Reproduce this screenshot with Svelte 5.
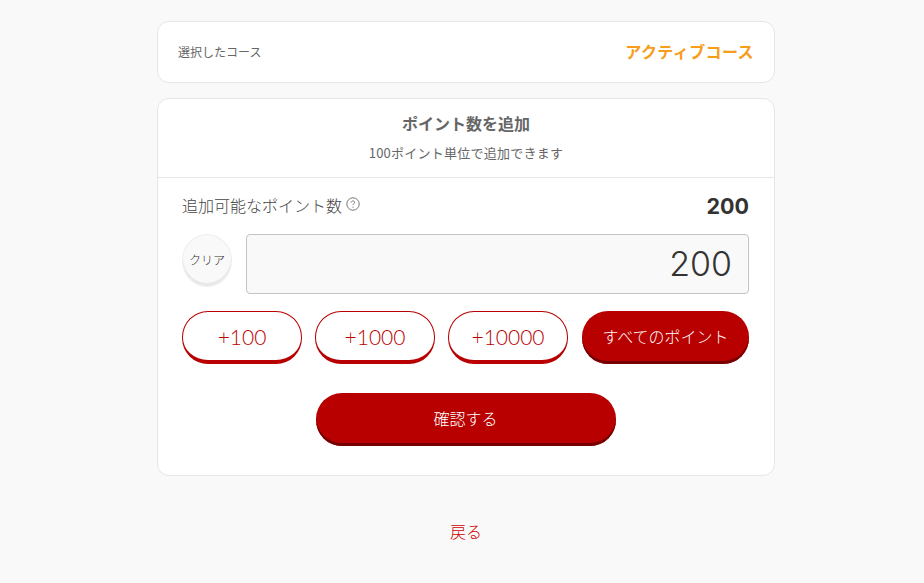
<script>
    const amounts = [100, 1000, 10000];
    let points = $state(200);
    const available = 200;
</script>

<div class="page">
    <div class="content">
        <section class="card course">
            <span class="course-label">選択したコース</span>
            <span class="course-name">アクティブコース</span>
        </section>

        <section class="card add">
            <header class="add-header">
                <h2>ポイント数を追加</h2>
                <p>100ポイント単位で追加できます</p>
            </header>

            <div class="add-body">
                <div class="available">
                    <span class="available-label">
                        追加可能なポイント数
                        <svg class="help" viewBox="0 0 14 14" width="14" height="14" aria-hidden="true">
                            <circle cx="7" cy="7" r="6.2" fill="none" stroke="#777" stroke-width="1" />
                            <path d="M5.3 5.5c0-1 .8-1.6 1.7-1.6s1.7.6 1.7 1.5c0 1.300-1.700 1.300-1.700 2.700" fill="none" stroke="#777" stroke-width="1" />
                            <circle cx="7" cy="10.100" r=".7" fill="#777" />
                        </svg>
                    </span>
                    <strong>{available}</strong>
                </div>

                <div class="input-row">
                    <button class="clear" onclick={() => (points = 0)}>クリア</button>
                    <div class="amount">{points}</div>
                </div>

                <div class="quick">
                    {#each amounts as amount}
                        <button class="quick-btn" onclick={() => (points += amount)}>+{amount}</button>
                    {/each}
                    <button class="quick-btn all" onclick={() => (points = available)}>すべてのポイント</button>
                </div>

                <button class="confirm">確認する</button>
            </div>
        </section>

        <a class="back" href="#top">戻る</a>
    </div>
</div>

<style>
    :global(body) {
        margin: 0;
        background: #f9f9f9;
    }

    .page {
        display: flex;
        justify-content: center;
        padding: 21px 0 0 8px;
        font-family: "Noto Sans CJK JP", "Liberation Sans", sans-serif;
        font-weight: 400;
        color: #555;
    }

    .content {
        width: 618px;
        display: flex;
        flex-direction: column;
    }

    .card {
        box-sizing: border-box;
        background: #fff;
        border: 1px solid #e6e6e6;
        border-radius: 12px;
    }

    .course {
        height: 62px;
        display: flex;
        align-items: center;
        justify-content: space-between;
        padding: 0 20px 2px;
    }

    .course-label {
        font-size: 12px;
        color: #666;
    }

    .course-name {
        font-size: 16px;
        font-weight: 700;
        letter-spacing: 0.4px;
        color: #f89c1c;
    }

    .add {
        margin-top: 15px;
        height: 378px;
    }

    .add-header {
        height: 79px;
        box-sizing: border-box;
        border-bottom: 1px solid #e6e6e6;
        text-align: center;
        padding-top: 13px;
    }

    .add-header h2 {
        margin: 0;
        font-size: 16px;
        line-height: 22px;
        font-weight: 700;
        color: #666;
    }

    .add-header p {
        margin: 9px 0 0;
        font-size: 13px;
        line-height: 20px;
        letter-spacing: 0.25px;
        color: #666;
    }

    .add-body {
        padding: 0 25px 0 24px;
        display: flex;
        flex-direction: column;
    }

    .available {
        height: 56px;
        display: flex;
        align-items: center;
        justify-content: space-between;
        padding-bottom: 2px;
        box-sizing: border-box;
    }

    .available-label {
        display: flex;
        align-items: center;
        gap: 4px;
        font-size: 16px;
        font-weight: 300;
        color: #444;
    }

    .help {
        margin-top: -2px;
    }

    .available strong {
        margin-top: 2px;
        font-family: "Inter", "Liberation Sans", sans-serif;
        font-size: 21.500px;
        font-weight: 700;
        color: #333;
    }

    .input-row {
        display: flex;
        align-items: flex-start;
        gap: 14px;
    }

    .clear {
        width: 50px;
        height: 53px;
        box-sizing: border-box;
        flex: none;
        padding: 0 0 3px;
        border: 1px solid #eee;
        border-radius: 50%;
        background: #f9f9f9;
        box-shadow: inset 0 -3px 0 #e8e8e8;
        font: inherit;
        font-size: 12px;
        font-weight: 300;
        color: #333;
    }

    .amount {
        flex: 1;
        height: 60px;
        box-sizing: border-box;
        border: 1px solid #c4c4c4;
        border-radius: 4px;
        background: #f9f9f9;
        padding-right: 16px;
        text-align: right;
        font-family: "Inter", "Liberation Sans", sans-serif;
        font-size: 34px;
        font-weight: 300;
        line-height: 57px;
        color: #333;
    }

    .quick {
        margin-top: 17px;
        display: grid;
        grid-template-columns: 120px 120px 120px 1fr;
        gap: 13px;
    }

    .quick-btn {
        height: 53px;
        box-sizing: border-box;
        padding: 0;
        border: 1px solid #b80000;
        border-bottom-width: 4px;
        border-radius: 26px;
        background: #fff;
        font-family: "Lato", "Liberation Sans", sans-serif;
        font-size: 21px;
        font-weight: 300;
        color: #b80000;
    }

    .quick-btn.all {
        margin-left: 1px;
        padding-bottom: 4px;
        border: 0;
        background: #b80000;
        box-shadow: inset 0 -3px 0 #760000;
        font-family: "Noto Sans CJK JP", sans-serif;
        font-size: 16px;
        font-weight: 300;
        color: #fff;
    }

    .confirm {
        align-self: center;
        margin-top: 29px;
        width: 300px;
        height: 53px;
        padding: 0 0 4px;
        border: 0;
        border-radius: 26px;
        background: #b80000;
        box-shadow: inset 0 -3px 0 #760000;
        font: inherit;
        font-size: 16px;
        font-weight: 300;
        color: #fff;
    }

    .back {
        margin-top: 43px;
        text-align: center;
        font-size: 16px;
        font-weight: 300;
        line-height: 24px;
        color: #c00;
        text-decoration: none;
    }
</style>
